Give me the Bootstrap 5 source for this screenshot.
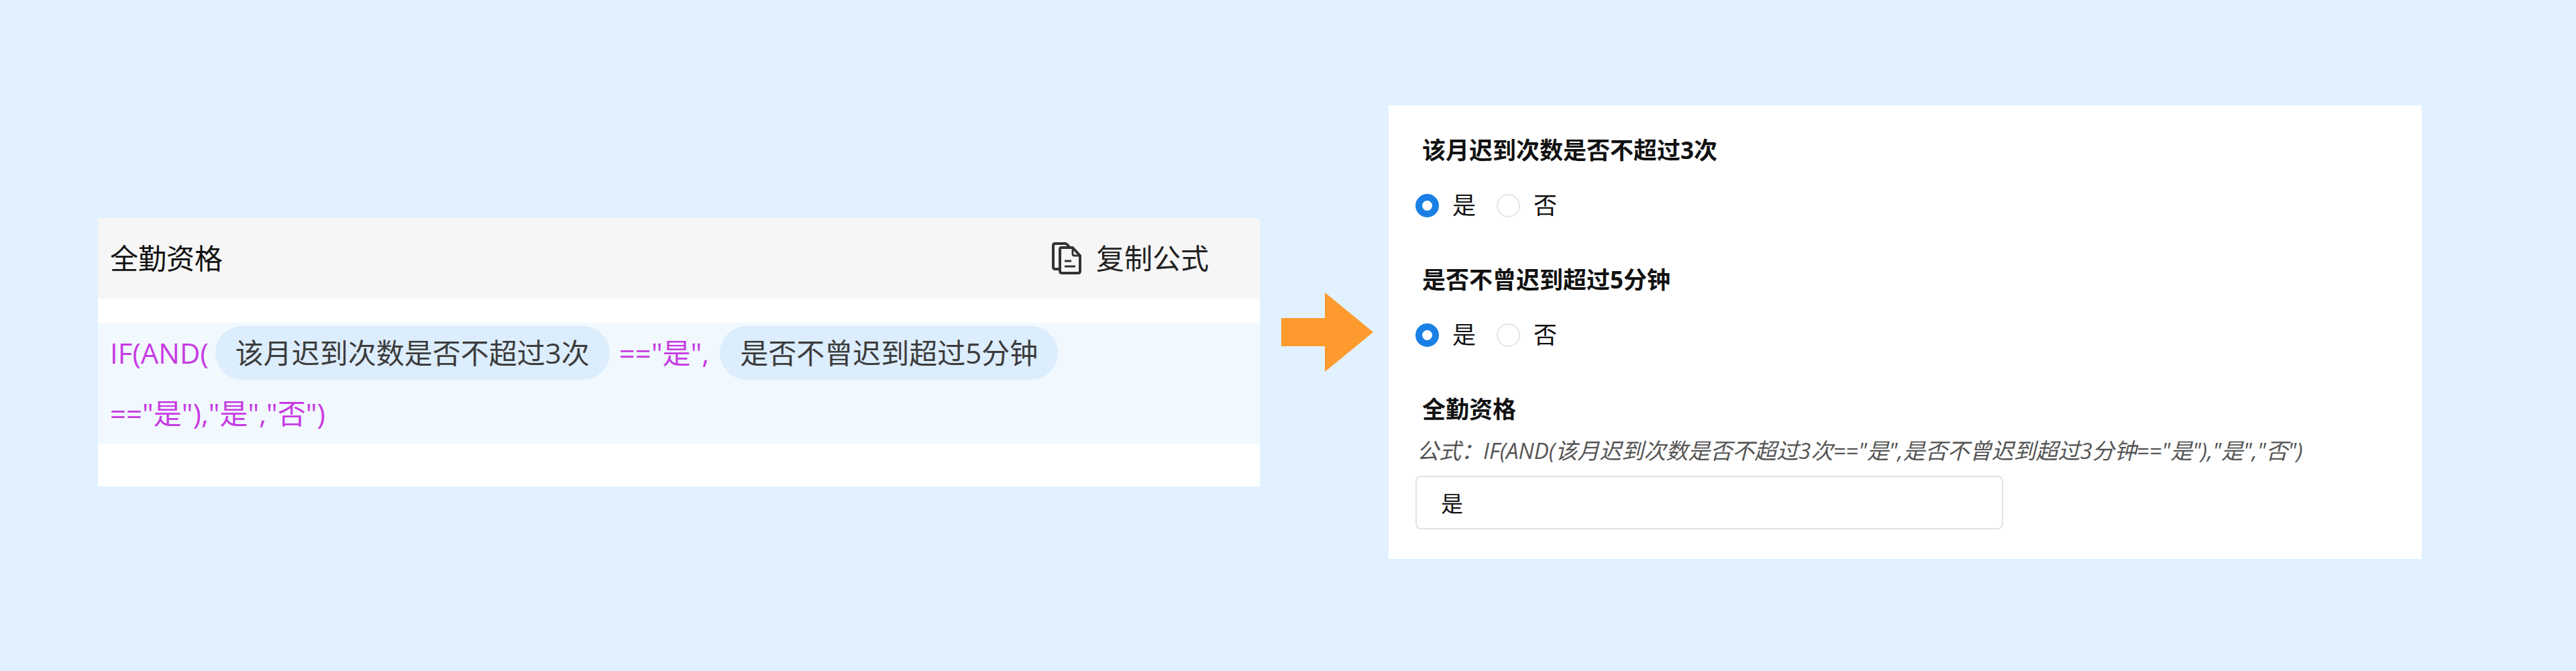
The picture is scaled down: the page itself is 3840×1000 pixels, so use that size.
<!DOCTYPE html>
<html lang="zh-CN">
<head>
<meta charset="utf-8">
<meta name="viewport" content="width=device-width, initial-scale=1">
<title>全勤资格</title>
<link rel="stylesheet" href="https://cdn.jsdelivr.net/npm/bootstrap@5.3.0/dist/css/bootstrap.min.css">
<style>
body { background: #e1f1ff; color: #111; font-family: "Open Sans", "Noto Sans CJK SC", sans-serif; }
.stage { min-height: 100vh; padding: 0 230px 10px 146px; }
.formula-panel { flex: 1732 1 0; min-width: 0; margin-top: 60px; padding-bottom: 64px; font-size: 42px; }
.result-panel { flex: 1460 1 0; min-width: 0; padding: 40px 40px 44px; font-size: 35px; line-height: 54px; }
.panel-head { background: #f6f6f6; height: 120px; padding: 0 76px 0 18px; margin-bottom: 36px; font-size: 42px; }
.panel-head h1 { font-size: 42px; font-weight: 400; }
.copy-btn { font-size: 42px; line-height: 60px; gap: 22px; color: #222; }
.formula-code { background: #f1f9ff; color: #c73be2; padding: 0 18px; line-height: 90px; }
.field-chip { display: inline-block; background: #dcedfd; color: #3c3c3c; line-height: 80px; border-radius: 40px; padding: 0 30px; }
.chip-first { margin: 0 14px 0 10px; }
.chip-second { margin-left: 16px; }
.arrow-box { padding: 0 23px 0 32px; }
.field-title { font-size: 35px; line-height: 54px; font-weight: 700; padding-left: 10px; margin: 0; color: #111; }
.field-block { margin-bottom: 57px; }
.choices { margin-top: 28px; gap: 31px; }
.choice { gap: 20px; }
.choice .form-check-input { width: 35px; height: 35px; margin: 0; border: 2px solid #e3e5ec; background-image: none; }
.choice .form-check-input:checked { border: 10px solid #1a80e6; background: #fff; }
.formula-note { font-size: 33px; line-height: 44px; color: #555; font-style: italic; margin: 13px 0 15px 2px; }
.result-input { width: 60%; height: 80px; border: 2px solid #dfe2ea; border-radius: 8px; padding: 0 36px; font-size: 33px; color: #111; }
</style>
<script src="https://cdn.jsdelivr.net/npm/bootstrap@5.3.0/dist/js/bootstrap.bundle.min.js"></script>
</head>
<body>
<main class="stage d-flex align-items-center">
  <section class="formula-panel bg-white">
    <header class="panel-head d-flex align-items-center justify-content-between">
      <h1 class="m-0">全勤资格</h1>
      <button type="button" class="copy-btn btn p-0 border-0 d-flex align-items-center">
        <svg width="44" height="48" viewBox="0 0 44 48" fill="none" stroke="#333" stroke-width="4" stroke-linejoin="round" aria-hidden="true">
          <path d="M12 40H5Q2 40 2 37V5Q2 2 5 2H20Q22 2 26 7"/>
          <path d="M14 8H31L42 20V43Q42 46 39 46H15Q12 46 12 43V11Q12 8 14 8Z"/>
          <path stroke-width="3" d="M31 8V17Q31 20 34 20H42M19 28H29M19 36H35"/>
        </svg>
        <span>复制公式</span>
      </button>
    </header>
    <div class="formula-code">IF(AND(<span class="field-chip chip-first">该月迟到次数是否不超过3次</span>=="是",<span class="field-chip chip-second">是否不曾迟到超过5分钟</span><br>=="是"),"是","否")</div>
  </section>

  <div class="arrow-box flex-shrink-0">
    <svg class="d-block" width="137" height="118" viewBox="0 0 137 118" fill="#ff9a2e" aria-hidden="true"><path d="M0 38H65V0L137 59L65 118V80H0Z"/></svg>
  </div>

  <form class="result-panel bg-white">
    <div class="field-block" role="radiogroup" aria-labelledby="late-count">
      <h2 class="field-title" id="late-count">该月迟到次数是否不超过3次</h2>
      <div class="choices d-flex">
        <div class="choice d-flex align-items-center"><input class="form-check-input" type="radio" name="count" id="count-yes" checked><label for="count-yes">是</label></div>
        <div class="choice d-flex align-items-center"><input class="form-check-input" type="radio" name="count" id="count-no"><label for="count-no">否</label></div>
      </div>
    </div>
    <div class="field-block" role="radiogroup" aria-labelledby="late-minutes">
      <h2 class="field-title" id="late-minutes">是否不曾迟到超过5分钟</h2>
      <div class="choices d-flex">
        <div class="choice d-flex align-items-center"><input class="form-check-input" type="radio" name="minutes" id="minutes-yes" checked><label for="minutes-yes">是</label></div>
        <div class="choice d-flex align-items-center"><input class="form-check-input" type="radio" name="minutes" id="minutes-no"><label for="minutes-no">否</label></div>
      </div>
    </div>
    <label class="field-title d-block" for="qualified">全勤资格</label>
    <p class="formula-note">公式：IF(AND(该月迟到次数是否不超过3次=="是",是否不曾迟到超过3分钟=="是"),"是","否")</p>
    <input class="result-input form-control" type="text" id="qualified" value="是">
  </form>
</main>
</body>
</html>
